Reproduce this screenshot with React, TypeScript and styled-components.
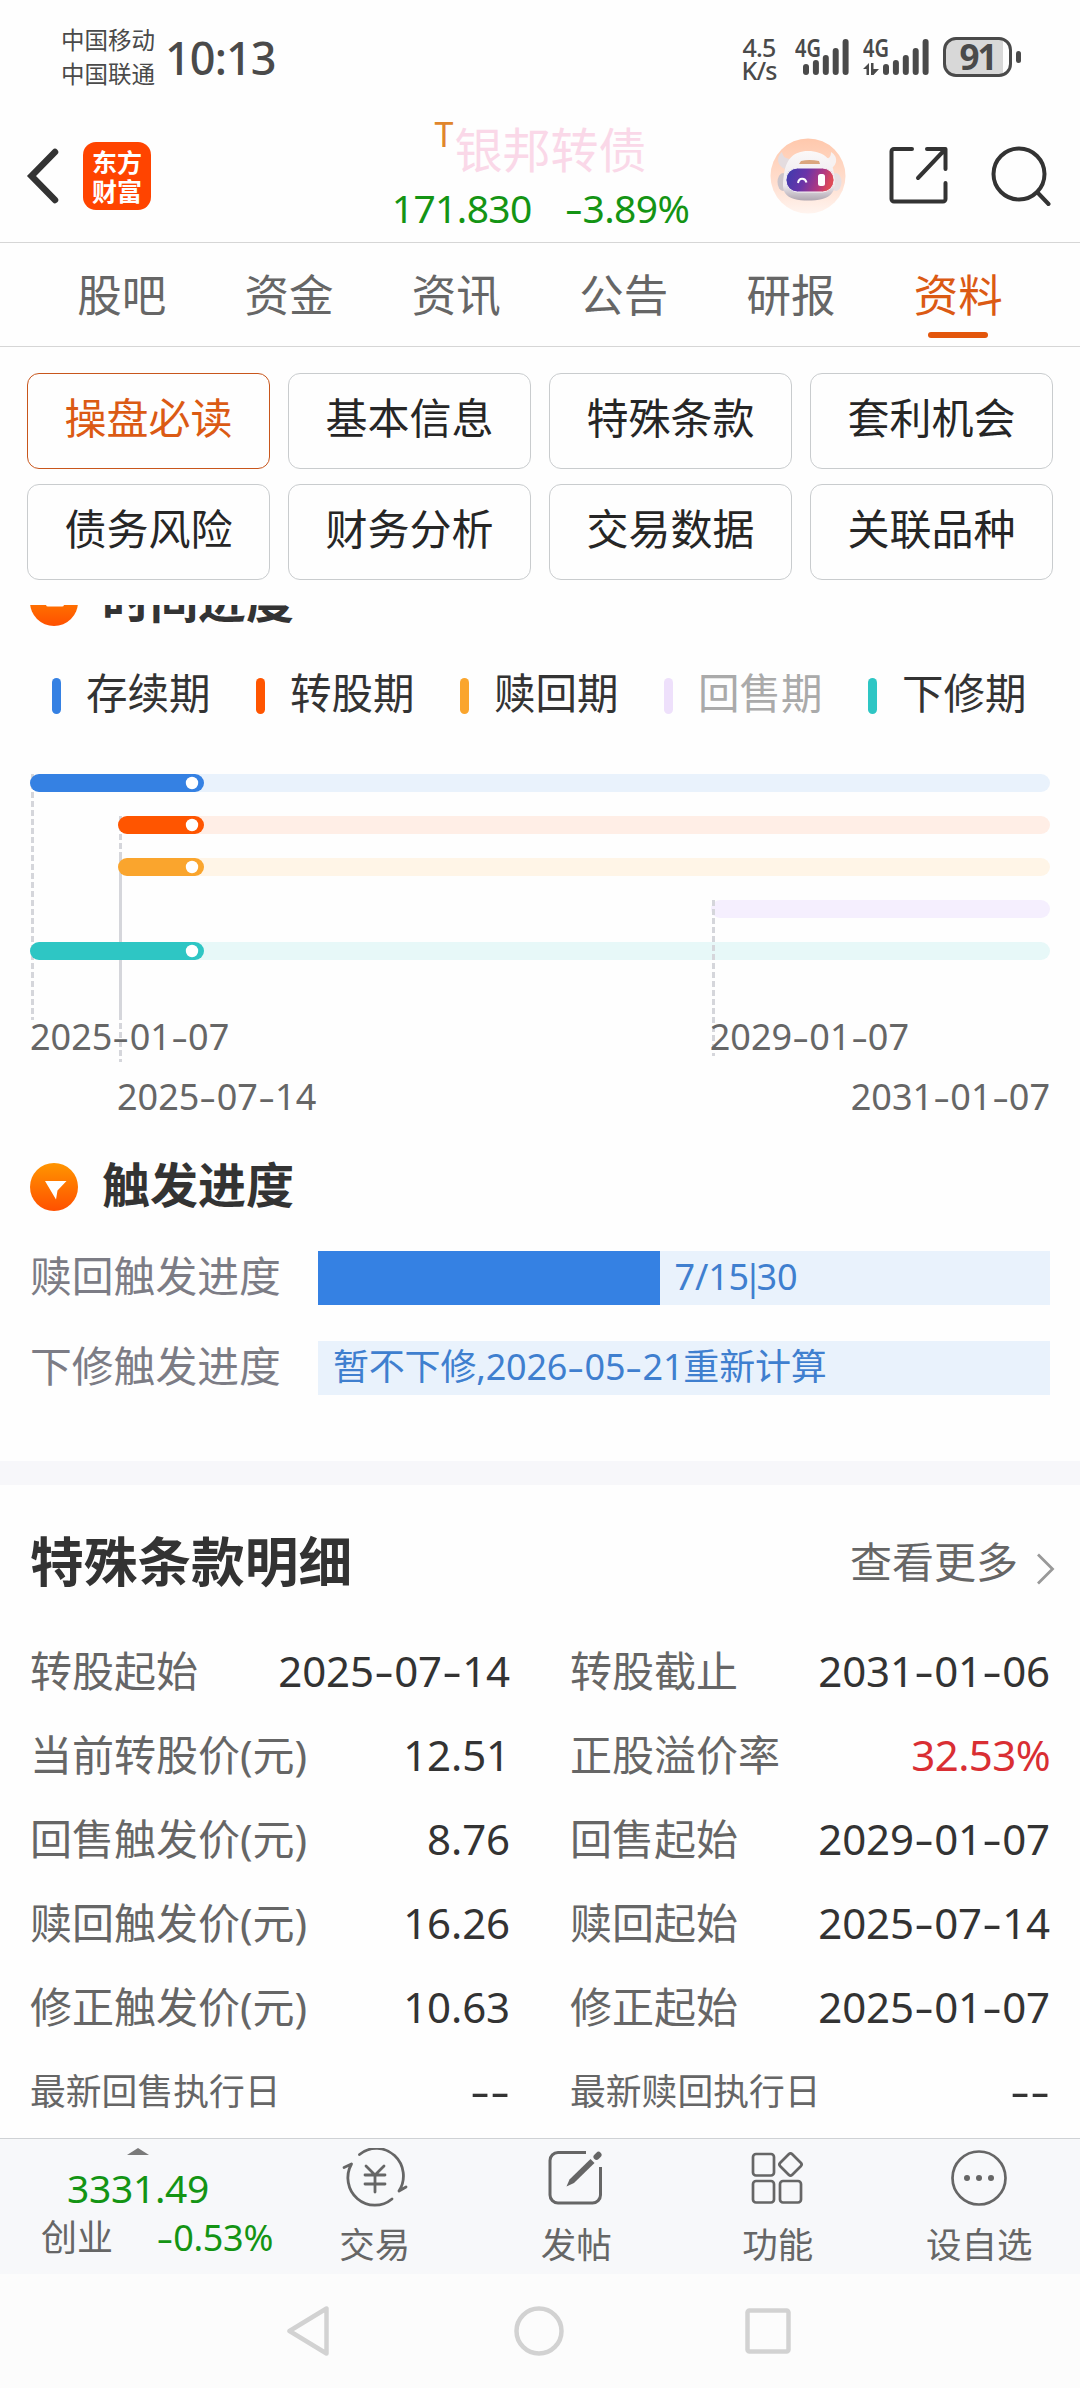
import React from 'react'
import styled, { createGlobalStyle } from 'styled-components'

const GlobalStyle = createGlobalStyle`
    * { box-sizing: border-box; }
    body {
        margin: 0;
        background-color: #fff;
        font-family: "Noto Sans", "Noto Sans CJK SC", sans-serif;
        color: #333;
    }
    svg { display: block; flex: none; }
`

const Page = styled.div`
    width: 1080px;
    height: 2388px;
    display: flex;
    flex-direction: column;
    overflow: hidden;
    background-color: #fefefe;
`

/* status bar */
const StatusBar = styled.div`
    height: 108px;
    flex: none;
    display: flex;
    justify-content: space-between;
    padding: 0 59px 0 61px;
    color: #4a4a4a;
`
const StatusSide = styled.div`
    display: flex;
    align-items: flex-start;
`
const Carriers = styled.div`
    padding-top: 23px;
    font-size: 23.5px;
    line-height: 34px;
`
const Clock = styled.div`
    margin: 32px 0 0 10px;
    font-size: 45px;
    line-height: 52px;
    letter-spacing: -0.9px;
    font-weight: 500;
`
const Speed = styled.div`
    width: 38px;
    padding-top: 36px;
    margin-right: 17px;
    font-size: 25px;
    line-height: 23px;
    font-weight: 500;
    text-align: center;
    letter-spacing: -0.8px;
`
const Signal = styled.div<{ width: number, gap: number }>`
    position: relative;
    width: ${(props) => props.width}px;
    margin: 38px ${(props) => props.gap}px 0 0;
    color: #4a4a4a;
`
const SignalType = styled.div`
    position: absolute;
    top: -4px;
    left: 0;
    font-size: 25px;
    line-height: 26px;
    font-weight: 600;
    transform: scaleX(0.8);
    transform-origin: left;
`
const Battery = styled.div`
    width: 69px;
    height: 40px;
    margin-top: 37px;
    border: 3px solid #4a4a4a;
    border-radius: 13px;
    background: linear-gradient(90deg, #d8d8d8 91%, #fefefe 91%);
    font-size: 35px;
    line-height: 33px;
    font-weight: 700;
    text-align: center;
    letter-spacing: -2px;
`
const BatteryTip = styled.div`
    width: 5px;
    height: 12px;
    margin: 51px 0 0 4px;
    border-radius: 3px;
    background-color: #4a4a4a;
`

/* header */
const Header = styled.div`
    height: 135px;
    flex: none;
    display: flex;
    justify-content: space-between;
    padding: 0 29px 0 25px;
    border-bottom: 1px solid #d6d6d6;
`
const HeaderLeft = styled.div`
    width: 286px;
    height: 135px;
    display: flex;
    align-items: center;
    gap: 22px;
`
const HeaderRight = styled.div`
    width: 281px;
    height: 135px;
    display: flex;
    justify-content: space-between;
    align-items: center;
`
const Logo = styled.div`
    width: 68px;
    height: 68px;
    padding-top: 5px;
    border-radius: 13px;
    background-color: #ff4400;
    color: #fff;
    font-family: "Noto Sans CJK SC", sans-serif;
    font-weight: 700;
    font-size: 25px;
    line-height: 29px;
    text-align: center;
`
const Quote = styled.div`
    display: flex;
    flex-direction: column;
    align-items: center;
`
const BondName = styled.div`
    display: flex;
    margin-top: 10px;
    font-size: 48px;
    line-height: 64px;
    color: #fad8e8;
`
const BondTag = styled.span`
    margin-right: 1px;
    color: #e0862c;
    font-size: 34px;
    line-height: 32px;
`
const BondPrice = styled.div`
    display: flex;
    gap: 32px;
    font-size: 39px;
    line-height: 52px;
    letter-spacing: -0.6px;
    color: #149414;
`

/* tabs */
const Tabs = styled.div`
    height: 104px;
    flex: none;
    display: flex;
    padding: 0 38px;
    border-bottom: 1px solid #d6d6d6;
`
const Tab = styled.div<{ $active: boolean }>`
    flex: 1;
    display: flex;
    flex-direction: column;
    align-items: center;
    padding-top: 20px;
    font-size: 44.5px;
    line-height: 64px;
    color: ${(props) => props.$active ? '#db5a14' : '#666'};

    &::after {
        content: '';
        width: 60px;
        height: 6px;
        margin-top: 5px;
        border-radius: 3px;
        background-color: ${(props) => props.$active ? '#e3560c' : 'transparent'};
    }
`

/* category buttons */
const Categories = styled.div`
    flex: none;
    height: 258px;
    padding: 26px 27px 0;
    display: grid;
    grid-template-columns: repeat(4, 243px);
    grid-auto-rows: 96px;
    align-content: start;
    gap: 15px 18px;
`
const Category = styled.div<{ $active: boolean }>`
    border: 1px solid ${(props) => props.$active ? '#c8561c' : '#c9ccce'};
    border-radius: 12px;
    font-size: 42px;
    line-height: 88px;
    text-align: center;
    color: ${(props) => props.$active ? '#db5a14' : '#262626'};
`

/* scrolled content, its first title is cut by the buttons above */
const Content = styled.div`
    flex: 1;
    min-height: 0;
    overflow: hidden;
`
const ProgressSection = styled.div`
    margin-top: -27px;
    padding: 0 30px 66px;
`
const TitleRow = styled.div<{ top: number }>`
    height: 48px;
    margin-top: ${(props) => props.top}px;
    display: flex;
    align-items: center;
    gap: 24px;
`
const TitleText = styled.div`
    font-size: 48px;
    line-height: 48px;
    font-weight: 700;
    padding-bottom: 4px;
`
const Legend = styled.div`
    margin-top: 46px;
    padding-left: 22px;
    display: flex;
`
const LegendItem = styled.div<{ $muted: boolean }>`
    width: 204px;
    height: 48px;
    flex: none;
    display: flex;
    align-items: center;
    font-size: 41.5px;
    line-height: 42px;
    color: ${(props) => props.$muted ? '#aaa' : '#333'};

    &:last-child { width: 194px; }
`
const LegendMark = styled.span<{ color: string }>`
    width: 9px;
    height: 36px;
    margin-right: 25px;
    border-radius: 5px;
    background-color: ${(props) => props.color};
`
const LegendText = styled.span`
    padding-bottom: 6px;
`
const Chart = styled.svg`
    margin-top: 54px;
    overflow: visible;
`
const DateRow = styled.div<{ left: number, top: number }>`
    position: relative;
    height: 44px;
    margin-top: ${(props) => props.top}px;
    padding-left: ${(props) => props.left}px;
    display: flex;
    justify-content: space-between;
    font-size: 36px;
    line-height: 46px;
    color: #666;
`
const DateText = styled.div<{ right?: number }>`
    margin-right: ${(props) => props.right ?? 0}px;
`
const TriggerRow = styled.div<{ top: number }>`
    height: 54px;
    margin-top: ${(props) => props.top}px;
    display: flex;
`
const TriggerLabel = styled.div`
    width: 288px;
    font-size: 41.8px;
    line-height: 50px;
    color: #7c7c85;
`
const TriggerTrack = styled.div`
    flex: 1;
    display: flex;
    background-color: #e9f2fc;
    font-size: 36px;
    line-height: 51px;
    color: #3f7fcf;
`
const TriggerFill = styled.div`
    background-color: #3581e3;
`
const TriggerText = styled.div`
    padding-left: 15px;
    letter-spacing: -0.2px;
    white-space: nowrap;
`
const Bar = styled.span`
    margin: 0 -6px;
`
const Divider = styled.div`
    height: 24px;
    background-color: #f7f7fa;
`

/* terms table */
const TermsSection = styled.div`
    padding: 41px 30px 0;
`
const TermsHead = styled.div`
    height: 72px;
    margin-bottom: 31px;
    display: flex;
    justify-content: space-between;
`
const TermsTitle = styled.div`
    font-size: 53.7px;
    line-height: 71px;
    font-weight: 700;
`
const More = styled.div`
    display: flex;
    align-items: center;
    gap: 18px;
    margin-right: -5px;
    font-size: 42px;
    line-height: 72px;
    color: #666;

    svg { margin-top: 13px; }
`
const TermsGrid = styled.div`
    display: grid;
    grid-template-columns: 480px 480px;
    column-gap: 60px;
`
const Term = styled.div`
    height: 84px;
    display: flex;
    justify-content: space-between;
    line-height: 84px;
`
const TermLabel = styled.div<{ $small: boolean }>`
    font-size: ${(props) => props.$small ? 35.8 : 42}px;
    color: #666;
`
const TermValue = styled.div<{ $red: boolean }>`
    font-size: 42px;
    letter-spacing: ${(props) => props.$red ? -0.6 : -0.1}px;
    color: ${(props) => props.$red ? '#d92e33' : '#333'};
`
const DashGlyph = styled.span`
    display: inline-block;
    width: 0.48em;
    text-align: center;
    transform: scaleX(1.45);
`

/* bottom bar */
const BottomBar = styled.div`
    height: 136px;
    flex: none;
    display: flex;
    border-top: 1px solid #cfd2d5;
    background-color: #f7f8fa;
    color: #666;
`
const IndexBox = styled.div`
    width: 274px;
    padding: 9px 0 0 2px;
    display: flex;
    flex-direction: column;
    align-items: center;
`
const IndexValue = styled.div`
    font-size: 39px;
    line-height: 51px;
    margin-top: 7px;
    color: #149414;
    letter-spacing: -0.3px;
`
const IndexRow = styled.div`
    width: 232px;
    margin-left: 38px;
    display: flex;
    justify-content: space-between;
    font-size: 36px;
    line-height: 50px;
`
const IndexChange = styled.span`
    color: #149414;
    letter-spacing: -0.3px;
`
const Action = styled.div`
    flex: 1;
    display: flex;
    flex-direction: column;
    align-items: center;
    padding-top: 9px;
    font-size: 35.5px;
    line-height: 50px;
`
const ActionText = styled.div`
    margin-top: 11px;
`
const NavBar = styled.div`
    height: 114px;
    flex: none;
    display: flex;
    justify-content: center;
    align-items: center;
    gap: 180px;
    padding-right: 2px;
    background-color: #fcfcfc;
`

const tabs = ['股吧', '资金', '资讯', '公告', '研报', '资料']
const categories = ['操盘必读', '基本信息', '特殊条款', '套利机会', '债务风险', '财务分析', '交易数据', '关联品种']

// start and current are x positions inside the 1020px wide chart
const periods = [
    { name: '存续期', color: '#3581e3', track: '#e9f2fc', start: 0, current: 174 },
    { name: '转股期', color: '#ff5500', track: '#ffeee6', start: 88, current: 174 },
    { name: '赎回期', color: '#faa52d', track: '#fff5e7', start: 88, current: 174 },
    { name: '回售期', color: '#eee0fb', track: '#f5effe', start: 681, current: 0 },
    { name: '下修期', color: '#2ec6c4', track: '#e7f8f8', start: 0, current: 174 },
]
const guides = [
    { x: 2.5, from: 0, to: 246 },
    { x: 90.5, from: 42, to: 288 },
    { x: 90.5, from: 84, to: 243 },
    { x: 683.5, from: 126, to: 282 },
]
const terms = [
    ['转股起始', '2025-07-14'], ['转股截止', '2031-01-06'],
    ['当前转股价(元)', '12.51'], ['正股溢价率', '32.53%'],
    ['回售触发价(元)', '8.76'], ['回售起始', '2029-01-07'],
    ['赎回触发价(元)', '16.26'], ['赎回起始', '2025-07-14'],
    ['修正触发价(元)', '10.63'], ['修正起始', '2025-01-07'],
    ['最新回售执行日', '--'], ['最新赎回执行日', '--'],
]

// numbers use a wide dash
const Num: React.FC<{ text: string }> = ({ text }) => (
    <>
        {text.split(/(-)/).map((x, i) => x === '-' ? <DashGlyph key={i}>-</DashGlyph> : x)}
    </>
)

const SignalBars: React.FC<{ x: number, arrows?: boolean }> = ({ x, arrows }) => (
    <svg width={x + 46} height='38' viewBox={`0 0 ${x + 46} 38`} fill='currentColor'>
        {[11, 15, 20, 27, 36].map((h, i) => (
            <rect key={h} x={x + i * 9.9} y={37 - h} width='6' height={h} rx='3' />
        ))}
        {arrows && <path d='M0 31l6-6v12H3.500v-6zM8 25h2.500v6H16l-5.500 6H8z' />}
    </svg>
)

const Robot = () => (
    <svg width='76' height='76' viewBox='0 0 76 76'>
        <defs>
            <linearGradient id='robotBg' x1='0' y1='0' x2='0' y2='1'>
                <stop offset='0' stopColor='#ffc8ac' />
                <stop offset='0.6' stopColor='#ffdfd0' />
                <stop offset='1' stopColor='#fff4ef' />
            </linearGradient>
            <linearGradient id='robotHead' x1='0' y1='0' x2='0' y2='1'>
                <stop offset='0' stopColor='#fbf8f8' />
                <stop offset='0.7' stopColor='#ece8ec' />
                <stop offset='1' stopColor='#aea5b0' />
            </linearGradient>
            <linearGradient id='robotFace' x1='0' y1='0' x2='1' y2='0.2'>
                <stop offset='0' stopColor='#3a3cae' />
                <stop offset='0.45' stopColor='#6a34a8' />
                <stop offset='0.8' stopColor='#b23880' />
                <stop offset='1' stopColor='#dd4a58' />
            </linearGradient>
        </defs>
        <circle cx='38' cy='38' r='37.500' fill='url(#robotBg)' />
        <path d='M12 14c-7 6-4 14 3 17l6-10c-5 0-8-2-9-7z' fill='#e4dcdf' />
        <path d='M61 14c8 5 6 14-1 17l-6-10c5 0 7-2 7-7z' fill='#f7f1f1' />
        <ellipse cx='13' cy='44' rx='5.500' ry='9' fill='#cbc4ca' />
        <ellipse cx='66' cy='44' rx='5.500' ry='9' fill='#e6dfe2' />
        <path d='M38 13c16 0 25 9 26 23 1 7 2 14-2 19-4 6-14 7.500-24 7.500S19 61 15 55c-3-5-2-12-1-19 2-14 9-23 24-23z' fill='url(#robotHead)' />
        <path d='M31 23q8-2 18 0l1 3H29z' fill='#dba67e' />
        <rect x='16' y='30' width='48' height='24' rx='11.500' fill='url(#robotFace)' stroke='#f7f3f6' strokeWidth='1' />
        <path d='M28 45c1-5.500 7-5.500 8.500-0.500' fill='none' stroke='#fff' strokeWidth='2' />
        <rect x='48' y='36' width='7' height='12' rx='2.500' fill='#fff' />
    </svg>
)

const SectionIcon: React.FC<{ id: string }> = ({ id }) => (
    <svg width='48' height='48' viewBox='0 0 48 48'>
        <defs>
            <linearGradient id={id} x1='0' y1='0' x2='0' y2='1'>
                <stop offset='0' stopColor='#ff9500' />
                <stop offset='1' stopColor='#ff5000' />
            </linearGradient>
        </defs>
        <circle cx='24' cy='24' r='24' fill={`url(#${id})`} />
        {id === 'timeIcon'
            ? <rect x='16' y='24' width='18' height='4.500' rx='2' fill='#fff' />
            : <path d='M15 18h21.500l-9 9.500L26 36.500z' fill='#fff' />}
    </svg>
)

const ProgressChart = () => (
    <Chart width='1020' height='240' viewBox='0 0 1020 240'>
        {periods.map((p, i) => (
            <rect key={p.name} x={p.start} y={i * 42} width={1020 - p.start} height='18' rx='9' fill={p.track} />
        ))}
        {guides.map((g, i) => (
            <line key={i} x1={g.x} x2={g.x} y1={g.from} y2={g.to} stroke='#d5d6db' strokeWidth='3' strokeDasharray='6 3' />
        ))}
        {periods.map((p, i) => p.current > 0 && (
            <g key={p.name}>
                <rect x={p.start} y={i * 42} width={p.current - p.start} height='18' rx='9' fill={p.color} />
                <circle cx={p.current - 12} cy={i * 42 + 9} r='6.200' fill='#fff' />
            </g>
        ))}
    </Chart>
)

const TradeIcon = () => (
    <svg width='66' height='60' viewBox='0 0 66 60' fill='none' stroke='#666' strokeWidth='2.800' strokeLinecap='round' strokeLinejoin='round'>
        <path d='M17.500 6.500A27 27.500 0 0 1 57 43l7-4' />
        <path d='M50 51A27 27.500 0 0 1 9.500 16l-7.500 3.500' />
        <path d='M24 18l9 9 9-9M33 27v17M23 27h20M23 36h20' />
    </svg>
)

const PostIcon = () => (
    <svg width='56' height='60' viewBox='0 0 56 60' fill='none' stroke='#666'>
        <path d='M38 4.500H10a8 8 0 0 0-8 8V47a8 8 0 0 0 8 8h34.500a8 8 0 0 0 8-8V19' strokeWidth='3' />
        <path d='M18.500 38.500l3-7L42.500 11l4 4L26 35z' fill='#666' stroke='none' />
        <path d='M48.500 8.800L50.500 6.800' strokeWidth='6' strokeLinecap='round' />
    </svg>
)

const FeatureIcon = () => (
    <svg width='54' height='60' viewBox='0 0 54 60' fill='none' stroke='#666' strokeWidth='2.700'>
        <rect x='2' y='6' width='21' height='21.500' rx='3' />
        <rect x='2' y='33' width='21' height='21.500' rx='3' />
        <rect x='29' y='33' width='21' height='21.500' rx='3' />
        <rect x='31' y='8' width='17' height='17' rx='2.500' transform='rotate(45 39.500 16.500)' />
    </svg>
)

const WatchIcon = () => (
    <svg width='58' height='60' viewBox='0 0 58 60' fill='#666'>
        <circle cx='29' cy='30' r='26.500' fill='none' stroke='#666' strokeWidth='2.700' />
        <circle cx='17' cy='30' r='3' />
        <circle cx='29' cy='30' r='3' />
        <circle cx='41' cy='30' r='3' />
    </svg>
)

const actions = [
    { title: '交易', icon: <TradeIcon /> },
    { title: '发帖', icon: <PostIcon /> },
    { title: '功能', icon: <FeatureIcon /> },
    { title: '设自选', icon: <WatchIcon /> },
]

const App: React.FC = () => {
  return (
    <Page>
        <GlobalStyle />
        <StatusBar>
            <StatusSide>
                <Carriers>
                    <div>中国移动</div>
                    <div>中国联通</div>
                </Carriers>
                <Clock>10:13</Clock>
            </StatusSide>
            <StatusSide>
                <Speed>
                    <div>4.5</div>
                    <div>K/s</div>
                </Speed>
                <Signal width={55} gap={13}>
                    <SignalType>4G</SignalType>
                    <SignalBars x={8} />
                </Signal>
                <Signal width={67} gap={13}>
                    <SignalType>4G</SignalType>
                    <SignalBars x={20} arrows />
                </Signal>
                <Battery>91</Battery>
                <BatteryTip />
            </StatusSide>
        </StatusBar>
        <Header>
            <HeaderLeft>
                <svg width='36' height='60' viewBox='0 0 36 60' fill='none' stroke='#333' strokeWidth='6.500' strokeLinecap='round' strokeLinejoin='miter'>
                    <path d='M30 6L6.500 30L30 54' />
                </svg>
                <Logo>东方<br />财富</Logo>
            </HeaderLeft>
            <Quote>
                <BondName>
                    <BondTag>T</BondTag>
                    银邦转债
                </BondName>
                <BondPrice>
                    <span>171.830</span>
                    <span><Num text='-3.89%' /></span>
                </BondPrice>
            </Quote>
            <HeaderRight>
                <Robot />
                <svg width='60' height='60' viewBox='0 0 60 60' fill='none' stroke='#333' strokeWidth='4' strokeLinecap='round' strokeLinejoin='round'>
                    <path d='M23 3H5a2.500 2.500 0 0 0-2.500 2.500V53a2.500 2.500 0 0 0 2.500 2.500h49a2.500 2.500 0 0 0 2.500-2.500V37' />
                    <path d='M38 3h18.500v20M56 3.500L29 32' />
                </svg>
                <svg width='60' height='60' viewBox='0 0 60 60' fill='none' stroke='#333' strokeWidth='4' strokeLinecap='round'>
                    <circle cx='28' cy='28' r='25.500' />
                    <path d='M47 47L57.500 58' />
                </svg>
            </HeaderRight>
        </Header>
        <Tabs>
            {tabs.map(x => <Tab key={x} $active={x === '资料'}>{x}</Tab>)}
        </Tabs>
        <Categories>
            {categories.map(x => <Category key={x} $active={x === '操盘必读'}>{x}</Category>)}
        </Categories>
        <Content>
            <ProgressSection>
                <TitleRow top={0}>
                    <SectionIcon id='timeIcon' />
                    <TitleText>时间进度</TitleText>
                </TitleRow>
                <Legend>
                    {periods.map(p => (
                        <LegendItem key={p.name} $muted={p.current === 0}>
                            <LegendMark color={p.color} />
                            <LegendText>{p.name}</LegendText>
                        </LegendItem>
                    ))}
                </Legend>
                <ProgressChart />
                <DateRow left={0} top={0}>
                    <DateText><Num text='2025-01-07' /></DateText>
                    <DateText right={141}><Num text='2029-01-07' /></DateText>
                </DateRow>
                <DateRow left={87} top={16}>
                    <DateText><Num text='2025-07-14' /></DateText>
                    <DateText><Num text='2031-01-07' /></DateText>
                </DateRow>
                <TitleRow top={45}>
                    <SectionIcon id='triggerIcon' />
                    <TitleText>触发进度</TitleText>
                </TitleRow>
                <TriggerRow top={40}>
                    <TriggerLabel>赎回触发进度</TriggerLabel>
                    <TriggerTrack>
                        <TriggerFill style={{ width: `${7 / 15 * 100}%` }} />
                        <TriggerText>7/15<Bar>|</Bar>30</TriggerText>
                    </TriggerTrack>
                </TriggerRow>
                <TriggerRow top={36}>
                    <TriggerLabel>下修触发进度</TriggerLabel>
                    <TriggerTrack>
                        <TriggerText>暂不下修,<Num text='2026-05-21' />重新计算</TriggerText>
                    </TriggerTrack>
                </TriggerRow>
            </ProgressSection>
            <Divider />
            <TermsSection>
                <TermsHead>
                    <TermsTitle>特殊条款明细</TermsTitle>
                    <More>
                        查看更多
                        <svg width='19' height='32' viewBox='0 0 19 32' fill='none' stroke='#999' strokeWidth='2.800'>
                            <path d='M2 1.500L16.500 16L2 30.500' />
                        </svg>
                    </More>
                </TermsHead>
                <TermsGrid>
                    {terms.map(([label, value]) => (
                        <Term key={label}>
                            <TermLabel $small={value === '--'}>{label}</TermLabel>
                            <TermValue $red={value.endsWith('%')}><Num text={value} /></TermValue>
                        </Term>
                    ))}
                </TermsGrid>
            </TermsSection>
        </Content>
        <BottomBar>
            <IndexBox>
                <svg width='22' height='7' viewBox='0 0 22 7' fill='#7a7a7a'>
                    <path d='M0 7L11 0l11 7z' />
                </svg>
                <IndexValue>3331.49</IndexValue>
                <IndexRow>
                    <span>创业</span>
                    <IndexChange><Num text='-0.53%' /></IndexChange>
                </IndexRow>
            </IndexBox>
            {actions.map(x => (
                <Action key={x.title}>
                    {x.icon}
                    <ActionText>{x.title}</ActionText>
                </Action>
            ))}
        </BottomBar>
        <NavBar>
            <svg width='46' height='54' viewBox='0 0 46 54' fill='none' stroke='#d2d2d2' strokeWidth='4.500' strokeLinejoin='round'>
                <path d='M39.500 4.500v45L2.500 27z' />
            </svg>
            <svg width='52' height='52' viewBox='0 0 52 52' fill='none' stroke='#d2d2d2' strokeWidth='4.500'>
                <circle cx='26' cy='26' r='22.500' />
            </svg>
            <svg width='46' height='48' viewBox='0 0 46 48' fill='none' stroke='#d2d2d2' strokeWidth='4.500'>
                <rect x='2.500' y='3.500' width='41' height='41' rx='2' />
            </svg>
        </NavBar>
    </Page>
  )
}

export default App
